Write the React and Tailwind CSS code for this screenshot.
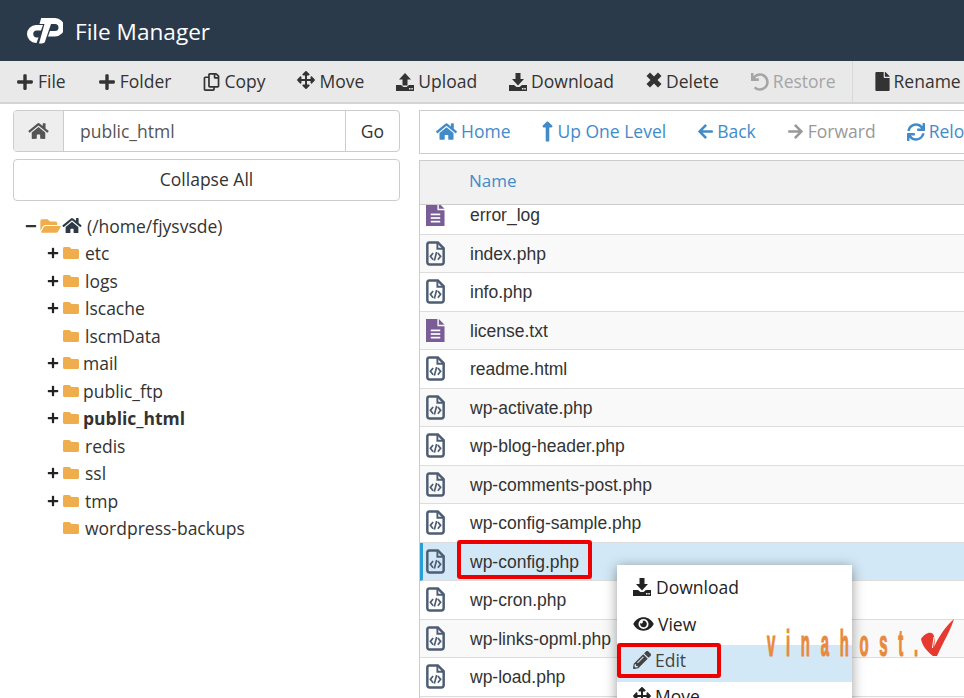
import React from "react";
import { FaPlus, FaRegCopy, FaArrowsAlt, FaUndo, FaFile, FaHome, FaLongArrowAltUp, FaArrowLeft, FaArrowRight, FaSync, FaFolder, FaFolderOpen, FaMinus, FaEye, FaPencilAlt } from "react-icons/fa";

const Tray = ({ up, hole = "#e9e9e9" }) => (
  <svg viewBox="0 0 18 18" className="w-[18px] h-[18px]" fill="currentColor">
    {up ? (
      <path d="M9 0 L15 6.5 H11.5 V12.5 H6.5 V6.5 H3 Z" />
    ) : (
      <path d="M6.5 0 H11.5 V6 H15 L9 12.5 L3 6 H6.5 Z" />
    )}
    <path d="M0 12 H5 L7.5 14 H10.5 L13 12 H18 V18 H0 Z" />
    <rect x="13" y="15" width="1.5" height="1.5" fill={hole} />
    <rect x="15.3" y="15" width="1.5" height="1.5" fill={hole} />
  </svg>
);

const Cross = () => (
  <svg viewBox="0 0 16 16" className="w-[16px] h-[16px] -mt-1" fill="currentColor">
    <path d="M4 0.5 L8 4.5 L12 0.5 L15.5 4 L11.5 8 L15.5 12 L12 15.5 L8 11.5 L4 15.5 L0.5 12 L4.5 8 L0.5 4 Z" />
  </svg>
);

const CodeFile = () => (
  <svg viewBox="0 0 20 26" className="w-[19px] h-[25px] shrink-0 ml-[1px]" fill="none">
    <path d="M3.5 1.4 H12.5 L18.6 7.5 V22 A2.6 2.6 0 0 1 16 24.6 H4 A2.6 2.6 0 0 1 1.4 22 V3.6 A2.2 2.2 0 0 1 3.5 1.4 Z" stroke="#4d5d74" strokeWidth="2.6" />
    <path d="M12 1.5 V8 H18.5" stroke="#4d5d74" strokeWidth="2" />
    <path d="M7.5 12.5 L4.6 16 L7.5 19.5 M12.5 12.5 L15.4 16 L12.5 19.5 M11.2 11.5 L8.8 20.5" stroke="#4d5d74" strokeWidth="1.8" />
  </svg>
);

const TextFile = () => (
  <svg viewBox="0 0 20 26" className="w-[19px] h-[25px] shrink-0 ml-[1px]">
    <path d="M0 1 H12 V8.5 H19.5 V25 H0 Z" fill="#7a5d96" />
    <path d="M13.5 1 L19.5 7 H13.5 Z" fill="#7a5d96" />
    <rect x="5" y="12" width="10" height="1.8" fill="#fff" />
    <rect x="5" y="15.8" width="10" height="1.8" fill="#fff" />
    <rect x="5" y="19.6" width="10" height="1.8" fill="#fff" />
  </svg>
);

const tools = [
  { t: "File", i: <FaPlus className="w-[18px] h-[18px]" /> },
  { t: "Folder", i: <FaPlus className="w-[18px] h-[18px]" /> },
  { t: "Copy", i: <FaRegCopy className="w-[17px] h-[18px]" /> },
  { t: "Move", i: <FaArrowsAlt className="w-[18px] h-[18px] -mt-1" /> },
  { t: "Upload", i: <Tray up /> },
  { t: "Download", i: <Tray /> },
  { t: "Delete", i: <Cross /> },
  { t: "Restore", i: <FaUndo className="w-[18px] h-[18px]" />, off: true },
];

const tree = [
  ["etc", 1, "ml-[5px]"],
  ["logs", 1, "ml-[5px]"],
  ["lscache", 1, "ml-[5px]"],
  ["lscmData", 0, "ml-[5px]"],
  ["mail", 1, "ml-[3px]"],
  ["public_ftp", 1, "ml-[3px]"],
  ["public_html", 1, "ml-[3px] font-bold"],
  ["redis", 0, "ml-[5px]"],
  ["ssl", 1, "ml-[5px]"],
  ["tmp", 1, "ml-[5px]"],
  ["wordpress-backups", 0, "ml-[5px]"],
];

const files = [
  ["error_log", "t"],
  ["index.php", "c"],
  ["info.php", "c"],
  ["license.txt", "t"],
  ["readme.html", "c"],
  ["wp-activate.php", "c"],
  ["wp-blog-header.php", "c"],
  ["wp-comments-post.php", "c"],
  ["wp-config-sample.php", "c"],
  ["wp-config.php", "c"],
  ["wp-cron.php", "c"],
  ["wp-links-opml.php", "c"],
  ["wp-load.php", "c"],
  ["wp-login.php", "c"],
];

const nav = [
  { t: "Home", i: <FaHome className="w-[21px] h-[19px]" />, gap: "gap-[4px]" },
  { t: "Up One Level", i: <FaLongArrowAltUp className="w-[13px] h-[23px]" />, gap: "gap-[3px]" },
  { t: "Back", i: <FaArrowLeft className="w-[17px] h-[17px]" />, gap: "gap-[3px]" },
  { t: "Forward", i: <FaArrowRight className="w-[17px] h-[17px]" />, gap: "gap-[4px]", off: true },
  { t: "Reload", i: <FaSync className="w-[18px] h-[18px]" />, gap: "gap-[4px]" },
];

export default function App() {
  return (
    <div className="relative w-[964px] h-[698px] overflow-hidden bg-white text-[#333] text-[17.5px] font-['Open_Sans',sans-serif]">
      <header className="h-[61px] bg-[#2a3a4b] flex items-center pl-[26px] gap-[12px]">
        <svg viewBox="0 0 37 26" className="w-[37px] h-[26px]" fill="#fff">
          <path d="M17 7 H10 A9 9 0 0 0 10 25 H10.5 L12.5 19.5 H10 A3.6 3.6 0 0 1 10 12.5 H15 Z" />
          <path d="M13 25.5 H15.5 A4 4 0 0 0 19.5 22 L25 6 H29 A3.5 3.5 0 0 1 29 13 H24 L22 18.5 H29 A9.2 9.2 0 0 0 29 0 H15.2 L13.5 6 H18.5 Z" />
        </svg>
        <span className="text-white text-[22.6px] leading-none mt-[3px]">File Manager</span>
      </header>

      <div className="h-[43px] bg-[#e9e9e9] border-b-2 border-[#d4d4d4] flex items-center pl-4 gap-8 whitespace-nowrap">
        {tools.map((b) => (
          <div key={b.t} className={"flex items-center gap-[4px] " + (b.off ? "text-[#a5a5a5]" : "text-[#333]")}>
            {b.i}
            <span>{b.t}</span>
          </div>
        ))}
        <div className="flex items-center gap-[4px] h-full border-l border-[#d8d8d8] pl-[22px] -ml-[16px]">
          <FaFile className="w-[15px] h-[19px]" />
          <span>Rename</span>
        </div>
      </div>

      <div className="flex">
        <aside className="w-[419px] shrink-0 pl-[13px] pr-[19px] pt-[6px]">
          <div className="h-[42px] flex border border-[#ccc] rounded-[4px] overflow-hidden">
            <div className="w-[50px] bg-[#eee] border-r border-[#ccc] flex items-center justify-center text-[#555]">
              <FaHome className="w-[21px] h-[18px]" />
            </div>
            <div className="flex-1 pl-[16px] flex items-center text-[#555]">public_html</div>
            <div className="w-[54px] border-l border-[#ccc] flex items-center justify-center">Go</div>
          </div>
          <div className="h-[42px] mt-[7px] border border-[#ccc] rounded-[4px] flex items-center justify-center pb-[1px]">Collapse All</div>

          <div className="mt-[11px] pl-[12px]">
            <div className="h-[27.5px] flex items-center">
              <FaMinus className="w-[12px] h-[12px] text-[#333]" />
              <FaFolderOpen className="ml-[3px] w-[21px] h-[18px] text-[#f0ad4e]" />
              <FaHome className="ml-[1px] w-[20px] h-[17px] text-[#2d3a46]" />
              <span className="ml-[5px]">(/home/fjysvsde)</span>
            </div>
            <div className="pl-[22px]">
              {tree.map(([n, plus, cls]) => (
                <div key={n} className="h-[27.5px] flex items-center">
                  <span className="w-[15px] shrink-0 flex">
                    {plus ? <FaPlus className="w-[12px] h-[12px] text-[#222]" /> : null}
                  </span>
                  <FaFolder className="w-[18px] h-[16px] text-[#f0ad4e] shrink-0" />
                  <span className={cls}>{n}</span>
                </div>
              ))}
            </div>
          </div>
        </aside>

        <main className="flex-1 min-w-0 pt-[6px]">
          <div className="h-[44px] w-[600px] border border-[#ccc] border-r-0 flex items-center pl-[16px] pb-[1px] gap-[31px] text-[#428bca] whitespace-nowrap">
            {nav.map((b) => (
              <div key={b.t} className={"flex items-center " + b.gap + (b.off ? " text-[#999]" : "")}>
                {b.i}
                <span>{b.t}</span>
              </div>
            ))}
          </div>
          <div className="mt-[6px] h-[45px] bg-[#f1f1f1] border border-[#ccc] border-r-0 flex items-center pl-[49px] pb-[3px] text-[17px] text-[#428bca]">Name</div>
          <div className="h-[494px] overflow-hidden border-l border-[#ccc] font-['Liberation_Sans',sans-serif]">
            <div className="-mt-[9px]">
              {files.map(([n, k], idx) => {
                const sel = n === "wp-config.php";
                return (
                  <div
                    key={n}
                    className={
                      "h-[38.5px] flex items-center border-b border-[#ddd] " +
                      (sel ? "bg-[#d3e8f6] border-l-[3px] border-l-[#2a9fd6] pl-[2px]" : (idx % 2 ? "bg-[#f9f9f9] pl-[5px]" : "bg-white pl-[5px]"))
                    }
                  >
                    {k === "t" ? <TextFile /> : <CodeFile />}
                    {sel ? (
                      <span className="relative ml-[25px] mt-[1px]">
                        {n}
                        <span className="absolute -left-[13px] -top-[9px] w-[135px] h-[39px] border-[4px] border-[#ee0000] rounded-[3px]" />
                      </span>
                    ) : (
                      <span className="ml-[25px] mt-[1px]">{n}</span>
                    )}
                  </div>
                );
              })}
            </div>
          </div>
        </main>
      </div>

      <div className="absolute left-[617px] top-[565px] w-[235px] h-[140px] bg-white shadow-[0_2px_12px_rgba(0,0,0,0.4)] pt-[4px] text-[#222]">
        <div className="h-[37px] flex items-center pl-[16px] pb-[1px] gap-[5px]"><Tray hole="#fff" /><span>Download</span></div>
        <div className="h-[36px] flex items-center pl-[16px] gap-[4px]"><FaEye className="w-[21px] h-[18px]" /><span>View</span></div>
        <div className="relative mt-[3px] h-[37px] flex items-center pl-[16px] pb-[7px] gap-[4px] bg-[#d3e8f6] text-[#444]">
          <FaPencilAlt className="w-[18px] h-[18px]" /><span>Edit</span>
          <span className="absolute left-0 -top-[2px] w-[104px] h-[35px] border-[4px] border-[#ee0000] rounded-[3px]" />
        </div>
        <div className="h-[28px] flex items-center pl-[16px] gap-[4px]"><FaArrowsAlt className="w-[18px] h-[18px]" /><span>Move</span></div>
      </div>

      <div className="absolute left-[767px] top-[619px] w-[187px] h-[40px]">
        <span className="absolute left-0 -bottom-[3px] font-['Liberation_Sans',sans-serif] font-bold text-[24px] leading-none text-[#e8893c] [-webkit-text-stroke:0.8px_#e8893c] tracking-[17.3px] origin-bottom-left scale-x-[0.62] scale-y-[1.5] whitespace-nowrap">vinahost.</span>
        <svg viewBox="0 0 34 37" className="absolute left-[153px] top-0 w-[34px] h-[37px]">
          <path d="M1 20 C4 15 10 12 13 15 C15 18 15 24 14 28 C19 17 26 7 34 0 C31 10 24 22 17 37 L13 37 C8 33 2 27 1 20 Z" fill="#e63a30" />
          <path d="M14 18 L12.5 29" stroke="#fff" strokeWidth="1" fill="none" />
        </svg>
      </div>
    </div>
  );
}
